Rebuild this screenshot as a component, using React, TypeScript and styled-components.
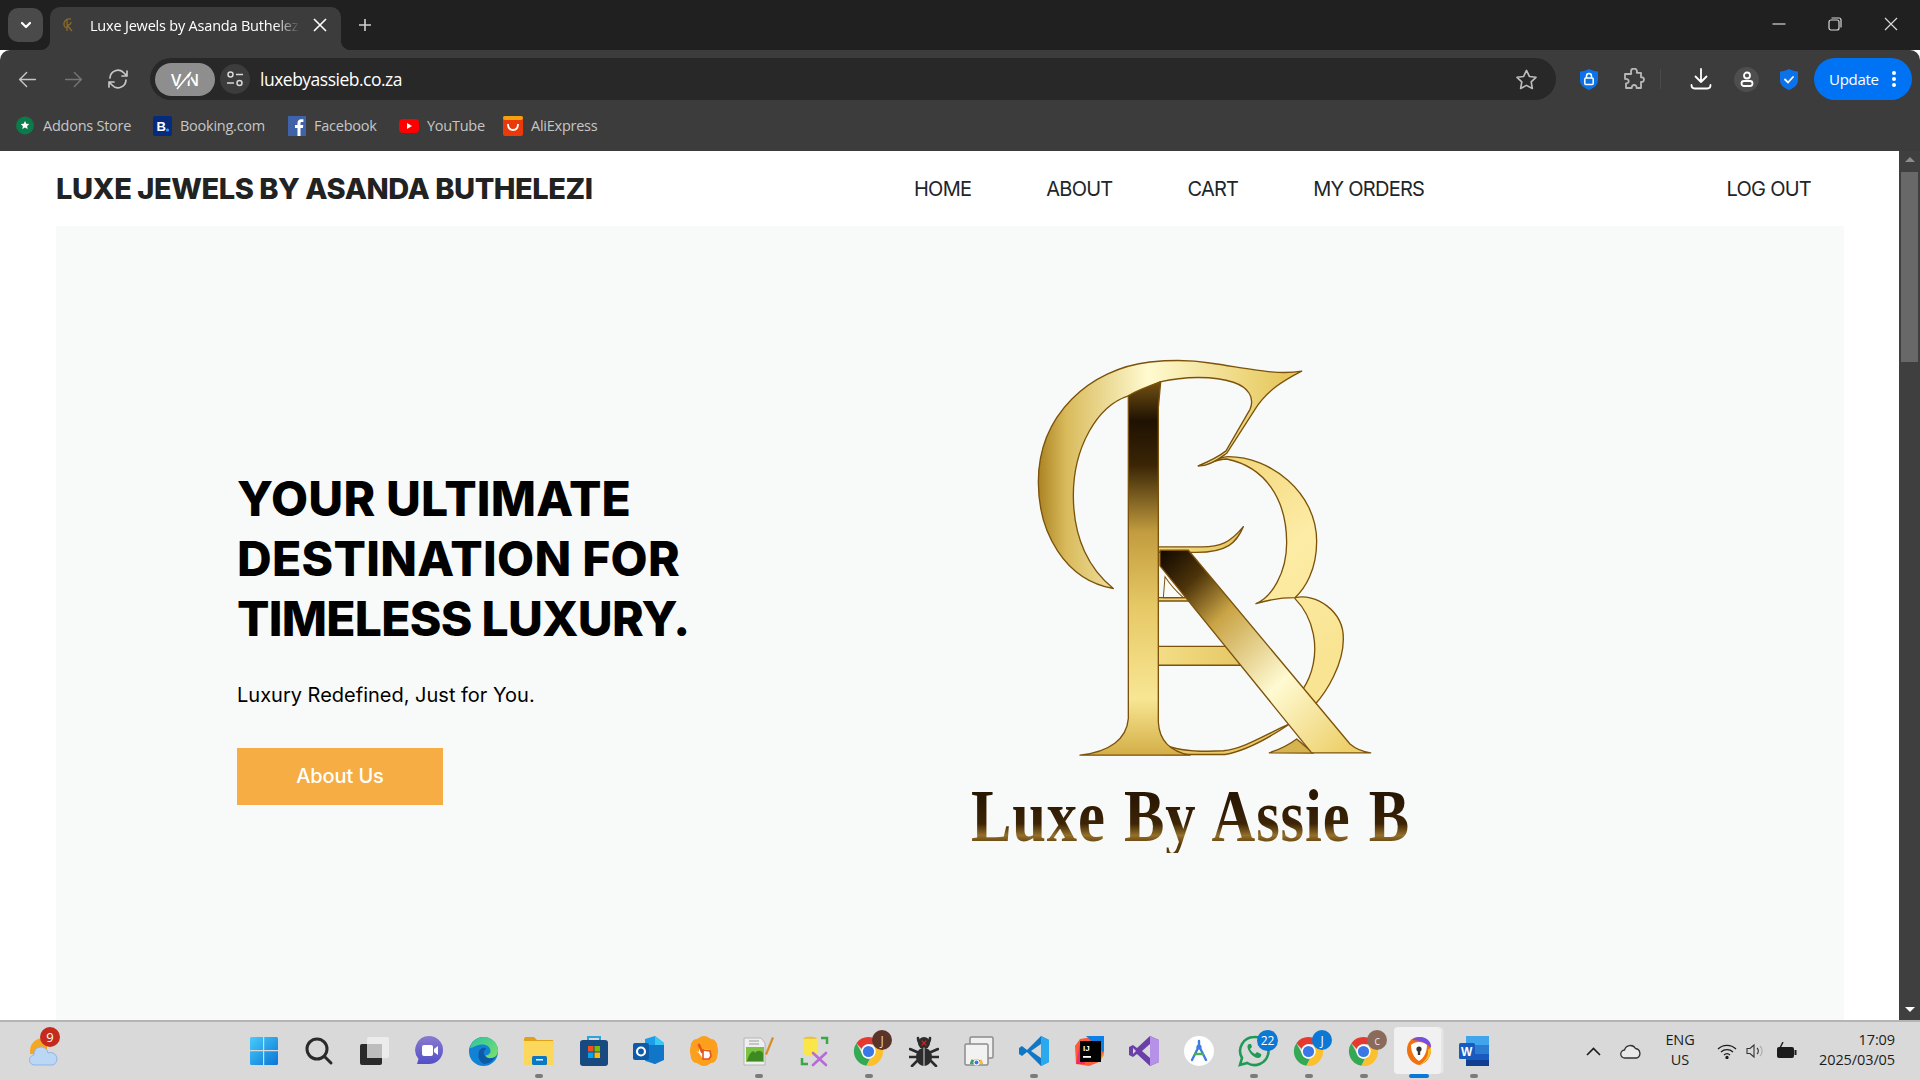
import React from "react";
import styled, { createGlobalStyle } from "styled-components";

const Global = createGlobalStyle`
  html, body { margin: 0; padding: 0; height: 100%; overflow: hidden; background: #fff; }
  * { box-sizing: border-box; }
`;

const UI = `"Open Sans", "Noto Sans", "Liberation Sans", sans-serif`;
const SITE = `Inter, "Liberation Sans", sans-serif`;

const Shell = styled.div`
  width: 1920px; height: 1080px; display: flex; flex-direction: column; overflow: hidden;
  font-family: ${UI};
`;

/* ---------- tab strip ---------- */
const TabStrip = styled.div`
  height: 50px; background: #202020; display: flex; align-items: flex-end; padding-left: 8px; flex: none;
`;
const TabMenu = styled.div`
  width: 35px; height: 34px; margin-bottom: 8px; border-radius: 10px; background: #4a4a4a;
  display: flex; align-items: center; justify-content: center;
`;
const Tab = styled.div`
  width: 291px; height: 43px; margin-left: 7px; background: #3c3c3c; border-radius: 10px 10px 0 0;
  display: flex; align-items: center; padding: 0 13px 7px 13px; position: relative; color: #fff;
  &::before, &::after {
    content: ""; position: absolute; bottom: 0; width: 10px; height: 10px;
  }
  &::before { left: -10px; background: radial-gradient(circle at 0 0, #202020 10px, #3c3c3c 10.5px); }
  &::after { right: -10px; background: radial-gradient(circle at 100% 0, #202020 10px, #3c3c3c 10.5px); }
`;
const TabFavicon = styled.svg`width: 10px; height: 14px; margin-right: 17px; flex: none;`;
const TabTitle = styled.span`
  width: 210px; white-space: nowrap; overflow: hidden; font-size: 14.5px; letter-spacing: -0.2px;
  -webkit-mask-image: linear-gradient(90deg, #000 88%, transparent 100%);
  mask-image: linear-gradient(90deg, #000 88%, transparent 100%);
`;
const TabClose = styled.svg`width: 16px; height: 16px; margin-left: 12px; flex: none;`;
const NewTab = styled.svg`width: 16px; height: 16px; margin: 0 0 17px 16px; flex: none;`;
const WindowControls = styled.div`
  margin-left: auto; display: flex; align-items: center; height: 50px; padding-bottom: 2px; margin-right: 1px;
`;
const WinBtn = styled.div`
  width: 56px; height: 48px; display: flex; align-items: center; justify-content: center;
`;

/* ---------- toolbar ---------- */
const Toolbar = styled.div`
  height: 58px; background: #3c3c3c; border-radius: 10px 10px 0 0; display: flex; align-items: flex-start;
  padding: 8px 8px 0 0; flex: none; position: relative;
`;
const NavBtn = styled.div<{ $w: number }>`
  width: ${(p) => p.$w}px; height: 42px; display: flex; align-items: center; justify-content: center; flex: none;
`;
const Omnibox = styled.div`
  width: 1406px; height: 42px; margin-left: 6px; border-radius: 21px; background: #282828;
  display: flex; align-items: center; padding: 0 18px 0 5px; flex: none;
`;
const VpnPill = styled.div`
  width: 60px; height: 33px; border-radius: 17px; background: #8e8e8e; color: #fff; display: flex;
  align-items: center; justify-content: center; font-size: 16.5px; font-weight: 600; position: relative;
  letter-spacing: 5px; padding-left: 5px;
  svg { position: absolute; left: 19px; top: 6px; }
`;
const SiteBtn = styled.div`
  width: 30px; height: 30px; margin-left: 5px; border-radius: 50%; background: #3c3c3c;
  display: flex; align-items: center; justify-content: center; flex: none;
`;
const Url = styled.span`
  margin-left: 10px; font-size: 17.5px; color: #fff; letter-spacing: -0.5px; flex: 1;
`;
const ToolIcons = styled.div`
  display: flex; align-items: center; height: 42px; margin-left: 14px; flex: 1;
`;
const ToolIcon = styled.div<{ $w: number }>`
  width: ${(p) => p.$w}px; height: 42px; display: flex; align-items: center; justify-content: center; flex: none;
`;
const ProfileDisc = styled.div`
  width: 25px; height: 25px; border-radius: 50%; background: #4e4e4e; display: flex; align-items: center; justify-content: center;
`;
const ToolSep = styled.div`width: 1px; height: 20px; background: #4a4a4a; margin: 0 23px 0 0; flex: none;`;
const UpdateBtn = styled.div`
  width: 98px; height: 42px; margin-left: auto; border-radius: 21px; background: #0073f5; color: #fff; font-size: 15px;
  display: flex; align-items: center; padding: 0 0 1px 15px; gap: 12px; flex: none; letter-spacing: -0.3px;
`;

/* ---------- bookmarks ---------- */
const Bookmarks = styled.div`
  height: 43px; background: #3c3c3c; display: flex; align-items: center; padding: 0 0 7px 16px; flex: none;
  border-bottom: 1px solid #3c3c3c;
`;
const Bookmark = styled.div<{ $w: number; $gap?: number }>`
  width: ${(p) => p.$w}px; display: flex; align-items: center; gap: ${(p) => p.$gap ?? 8}px; flex: none; color: #c6c6c6;
  font-size: 14.5px; letter-spacing: -0.25px;
`;

/* ---------- page ---------- */
const PageRow = styled.div`flex: 1; min-height: 0; display: flex; background: #fff;`;
const Page = styled.div`flex: 1; min-width: 0; padding: 0 55px 0 56px; display: flex; flex-direction: column; overflow: hidden;`;
const Header = styled.header`
  height: 75px; display: flex; align-items: center; flex: none; padding-bottom: 1px;
`;
const Brand = styled.div`
  width: 858px; font-family: ${SITE}; font-weight: 800; font-size: 29px; color: #222; letter-spacing: -0.45px; white-space: nowrap; flex: none;
`;
const NavList = styled.nav`display: flex; gap: 75px; flex: none; margin-top: 2px;`;
const NavItem = styled.a`
  font-family: ${SITE}; font-size: 20px; font-weight: 400; color: #212529; letter-spacing: -0.75px; white-space: nowrap;
`;
const LogOut = styled(NavItem)`margin-left: auto; margin-right: 33px; margin-top: 2px;`;
const Hero = styled.section`flex: 1; min-height: 0; background: #f8faf9; display: flex;`;
const HeroText = styled.div`width: 894px; padding: 243px 0 0 181px; flex: none;`;
const Heading = styled.h1`
  margin: 0; font-family: ${SITE}; font-size: 48px; line-height: 60px; font-weight: 800; color: #000;
`;
const HeadingLine = styled.span<{ $track: number }>`
  display: block; letter-spacing: ${(p) => p.$track}px; white-space: nowrap;
`;
const Sub = styled.p`
  margin: 31px 0 0; font-family: ${SITE}; font-size: 20px; line-height: 30px; color: #000; letter-spacing: 0;
`;
const AboutBtn = styled.a`
  margin-top: 38px; width: 206px; height: 57px; background: #f6ad43; color: #fff; display: flex; align-items: center;
  justify-content: center; font-family: ${SITE}; font-size: 20px; font-weight: 500; letter-spacing: -0.1px; padding-bottom: 1px;
`;
const LogoCol = styled.div`padding-top: 114px; display: flex; flex-direction: column; flex: none;`;
const LogoMark = styled.svg`width: 480px; height: 426px; display: block;`;
const Wordmark = styled.div`
  margin: 14px 0 0 21px; font-family: "Liberation Serif", serif; font-size: 73px; line-height: 73px; white-space: nowrap; font-weight: 700;
  letter-spacing: 1px; word-spacing: 3px; transform: scaleX(0.83); transform-origin: 0 50%; width: 540px;
  background: linear-gradient(180deg, #2a1703 25%, #3c2406 60%, #94702a 76%, #5a3a0c 88%);
  -webkit-background-clip: text; background-clip: text; color: transparent;
`;

const Scrollbar = styled.div`
  width: 21px; flex: none; background: #3f3f3f; display: flex; flex-direction: column; align-items: center; position: relative;
`;
const ScrollUp = styled.div`
  margin-top: 6px; width: 0; height: 0; border-left: 5px solid transparent; border-right: 5px solid transparent; border-bottom: 5px solid #8c8c8c;
`;
const ScrollThumb = styled.div`margin-top: 10px; width: 17px; height: 190px; background: #686868;`;
const ScrollDown = styled.div`
  margin-top: auto; margin-bottom: 8px; width: 0; height: 0; border-left: 5px solid transparent; border-right: 5px solid transparent; border-top: 5px solid #fff;
`;

/* ---------- taskbar ---------- */
const Taskbar = styled.footer`
  height: 60px; flex: none; background: #d9d9d9; border-top: 2px solid #b4b4b4; display: flex; align-items: center; position: relative;
`;
const TaskLeft = styled.div`width: 236px; padding-left: 15px; flex: none; display: flex;`;
const TaskApps = styled.div`display: flex; flex: none; width: 1344px;`;
const Slot = styled.div<{ $active?: boolean }>`
  width: 55px; height: 54px; display: flex; align-items: center; justify-content: center; position: relative; flex: none;
  ${(p) => p.$active && `
    &::before { content: ""; position: absolute; left: 0; top: 3px; width: 47px; height: 47px; margin-left: 3px; background: #f1f1f1; border-radius: 4px; box-shadow: 3px 0 0 -0.5px #e6e6e6; }
  `}
  svg { position: relative; }
`;
const Running = styled.span<{ $active?: boolean }>`
  position: absolute; bottom: 0px; left: 50%; transform: translateX(-50%); height: 4px; border-radius: 2px;
  width: ${(p) => (p.$active ? 20 : 8)}px; background: ${(p) => (p.$active ? "#0a78d4" : "#7b7b7b")};
`;
const Badge = styled.span<{ $bg: string; $fg?: string; $size?: number }>`
  position: absolute; left: 31px; top: 6px; width: ${(p) => p.$size ?? 20}px; height: ${(p) => p.$size ?? 20}px; border-radius: 50%;
  background: ${(p) => p.$bg}; color: ${(p) => p.$fg ?? "#fff"}; font-size: 12px; display: flex; align-items: center; justify-content: center;
  font-family: "Open Sans", sans-serif;
`;
const WeatherBadge = styled(Badge)`left: 25px; top: 3px; font-size: 13px;`;
const Tray = styled.div`flex: 1; display: flex; align-items: center; height: 100%; color: #1c1c1c;`;
const TrayIcon = styled.div<{ $w: number }>`
  width: ${(p) => p.$w}px; display: flex; justify-content: center; align-items: center; flex: none;
`;
const Lang = styled.div`
  width: 48px; text-align: center; font-size: 14.5px; line-height: 20px; flex: none; letter-spacing: -0.1px; padding-bottom: 2px;
`;
const Clock = styled.div`
  margin-left: auto; margin-right: 25px; text-align: right; font-size: 14.5px; line-height: 20px; letter-spacing: -0.1px; padding-bottom: 2px;
`;

/* ---------- icons ---------- */
const S = ({ size = 20, vb = 24, c = "currentColor", w = 2, children }: any) => (
  <svg width={size} height={size} viewBox={`0 0 ${vb} ${vb}`} fill="none" stroke={c} strokeWidth={w} strokeLinecap="round" strokeLinejoin="round">
    {children}
  </svg>
);

const ChromeIcon = () => (
  <svg width="31" height="31" viewBox="0 0 32 32">
    <path d="M16 1a15 15 0 0 1 13 7.5H16a7.5 7.5 0 0 0-7 4.8L3.5 7.5A15 15 0 0 1 16 1z" fill="#e5392f" />
    <path d="M3.5 7.5 9.6 18.5a7.5 7.5 0 0 0 7.9 5L13.8 30.8A15 15 0 0 1 3.5 7.5z" fill="#34a853" />
    <path d="M29 8.5a15 15 0 0 1-15.2 22.3l6-10.6A7.5 7.5 0 0 0 22 11z" fill="#fbc02d" />
    <circle cx="16" cy="16" r="7.4" fill="#fff" />
    <circle cx="16" cy="16" r="5.8" fill="#3b78e7" />
  </svg>
);

const Apps = () => (
  <>
    <Slot>
      <svg width="30" height="30" viewBox="0 0 30 30">
        <defs>
          <linearGradient id="wn" x1="0" y1="0" x2="1" y2="1"><stop offset="0" stopColor="#46cdfb" /><stop offset="1" stopColor="#0a74d6" /></linearGradient>
        </defs>
        <path d="M1 2.5A1.5 1.5 0 0 1 2.5 1H14v13H1zM15.2 1H27.5A1.5 1.5 0 0 1 29 2.5V14H15.2zM1 15.2H14V29H2.5A1.5 1.5 0 0 1 1 27.5zM15.2 15.2H29v12.3a1.5 1.5 0 0 1-1.5 1.5H15.2z" fill="url(#wn)" />
      </svg>
    </Slot>
    <Slot>
      <svg width="30" height="30" viewBox="0 0 30 30" fill="none" stroke="#2a2a2a" strokeWidth="3" strokeLinecap="round">
        <circle cx="13" cy="13" r="10" /><path d="M20.5 20.5 27 27" />
      </svg>
    </Slot>
    <Slot>
      <svg width="30" height="30" viewBox="0 0 30 30">
        <rect x="1" y="8" width="22" height="21" rx="2" fill="#2a2a2a" />
        <rect x="8" y="1" width="22" height="21" rx="2" fill="#eeeeee" fillOpacity="0.85" />
        <rect x="8" y="8" width="15" height="14" fill="#bdbdbd" />
      </svg>
    </Slot>
    <Slot>
      <svg width="30" height="32" viewBox="0 0 30 32">
        <defs><linearGradient id="mt" x1="0" y1="0" x2="0" y2="1"><stop offset="0" stopColor="#8a7ad0" /><stop offset="1" stopColor="#5350c6" /></linearGradient></defs>
        <path d="M15 1a14 14 0 0 1 14 14 14 14 0 0 1-14 14H3l1.5-5A14 14 0 0 1 15 1z" fill="url(#mt)" />
        <rect x="8" y="10" width="11" height="11" rx="2" fill="#fff" /><path d="M20 14l4-3v9l-4-3z" fill="#fff" />
      </svg>
    </Slot>
    <Slot>
      <svg width="31" height="31" viewBox="0 0 32 32">
        <defs>
          <linearGradient id="ed" x1="0" y1="0" x2="1" y2="1"><stop offset="0" stopColor="#2bc4a0" /><stop offset="1" stopColor="#7ee06a" /></linearGradient>
        </defs>
        <circle cx="16" cy="16" r="15" fill="#1283d4" />
        <path d="M2 12C4 4 11 1 16 1c8 0 15 6 15 14 0 5-4 8-8 8-3 0-5-1-5-3 3 0 6-2 5-6-1-5-7-6-11-5-5 1-8 4-10 3z" fill="url(#ed)" />
        <path d="M11 18c0-4 3-6 6-6 2 0 2 2 0 3-2 2 0 7 5 8 2 0 4 0 6-1-3 5-9 8-13 6-3-2-5-6-4-10z" fill="#0c5aa8" />
      </svg>
    </Slot>
    <Slot>
      <svg width="30" height="30" viewBox="0 0 30 30">
        <path d="M0 3a2 2 0 0 1 2-2h8l3 3h16v4H0z" fill="#e0a117" />
        <path d="M0 5h30v23a1 1 0 0 1-1 1H1a1 1 0 0 1-1-1z" fill="#fbd75b" />
        <rect x="8" y="20" width="15" height="9" rx="1.5" fill="#0a78c4" /><rect x="12" y="23" width="7" height="1.5" fill="#eaf5ff" />
      </svg>
      <Running />
    </Slot>
    <Slot>
      <svg width="30" height="32" viewBox="0 0 30 32">
        <path d="M9 6V2h12v4" fill="none" stroke="#2fa4dc" strokeWidth="2" />
        <rect x="1" y="5" width="28" height="26" rx="3" fill="#164a80" />
        <rect x="9" y="11" width="5.5" height="5.5" fill="#f25022" /><rect x="15.5" y="11" width="5.5" height="5.5" fill="#7fba00" />
        <rect x="9" y="17.5" width="5.5" height="5.5" fill="#00a4ef" /><rect x="15.5" y="17.5" width="5.5" height="5.5" fill="#ffb900" />
      </svg>
    </Slot>
    <Slot>
      <svg width="31" height="30" viewBox="0 0 31 30">
        <path d="M12 3 22 0l9 7v16l-9 5-10-3z" fill="#1b9fe8" /><path d="M22 0l9 7v8H22z" fill="#38c9f5" /><path d="M12 9h19v15l-9 4-10-4z" fill="#1276c8" />
        <rect x="0" y="7" width="16" height="17" rx="2" fill="#0d5ba8" />
        <circle cx="8" cy="15.5" r="4" fill="none" stroke="#fff" strokeWidth="2.2" />
      </svg>
    </Slot>
    <Slot>
      <svg width="30" height="32" viewBox="0 0 30 32">
        <path d="M15 1c3 0 5 2 7 3 3 0 5 2 6 5 0 2 1 4 1 7s-1 5-1 7c-1 3-3 5-6 5-2 1-4 3-7 3s-5-2-7-3c-3 0-5-2-6-5 0-2-1-4-1-7s1-5 1-7c1-3 3-5 6-5 2-1 4-3 7-3z" fill="#fb9f1d" />
        <path d="M10 10l4 8 1-4 6 1 1 5-2 4h-6l-4-6-3-2 3 1z" fill="#fff" /><path d="M10 10l3 7" stroke="#e2541b" strokeWidth="2.5" strokeLinecap="round" /><path d="M14 15l7 1 1 5-2 3h-6z" fill="none" stroke="#e2541b" strokeWidth="1.6" />
      </svg>
    </Slot>
    <Slot>
      <svg width="31" height="32" viewBox="0 0 31 32">
        <path d="M1 3h17l4 5v22H1z" fill="#efefef" stroke="#b5b5b5" />
        <rect x="3" y="12" width="18" height="15" fill="#7cc243" /><path d="M4 26c3-9 6-12 8-8 2-3 6-3 8 0v8z" fill="#3d8a22" />
        <path d="M6 6h10M6 9h10" stroke="#9a9a9a" /><path d="M22 19 29 2l2 1-7 17z" fill="#d98b24" />
      </svg>
      <Running />
    </Slot>
    <Slot>
      <svg width="30" height="32" viewBox="0 0 30 32">
        <ellipse cx="11" cy="4" rx="7" ry="2.5" fill="#e6c73c" /><path d="M4 4v14c0 3 14 3 14 0V4" fill="#fbe64a" />
        <path d="M22 3h6v6M3 23v6h6" fill="none" stroke="#39a845" strokeWidth="2.5" />
        <path d="M14 18l13 12M27 18 14 30" stroke="#b66bd6" strokeWidth="2.6" strokeLinecap="round" />
      </svg>
    </Slot>
    <Slot>
      <ChromeIcon />
      <Running />
      <Badge $bg="#5a3428" $fg="#e8d6cf">J</Badge>
    </Slot>
    <Slot>
      <svg width="30" height="32" viewBox="0 0 30 32" fill="none" stroke="#2c2c2c" strokeWidth="2.6" strokeLinecap="round">
        <path d="M9 3c0 3 1 5 3 6M21 3c0 3-1 5-3 6M1 14l7 3M29 14l-7 3M0 22h7M30 22h-7M3 31l5-5M27 31l-5-5" />
        <circle cx="15" cy="8" r="6" fill="#2c2c2c" stroke="none" />
        <path d="M15 13c5 0 8 4 8 9s-4 9-8 9-8-4-8-9 3-9 8-9z" fill="#2c2c2c" stroke="none" />
        <path d="M15 13v18" stroke="#d9d9d9" strokeWidth="1" />
        <path d="M13 6l2 2 2-2M13 10l2-2 2 2" stroke="#d42020" strokeWidth="1.2" />
      </svg>
    </Slot>
    <Slot>
      <svg width="30" height="30" viewBox="0 0 30 30">
        <rect x="6" y="1" width="23" height="21" rx="1.5" fill="#f0f0f0" stroke="#8c8c8c" strokeWidth="1.5" />
        <rect x="1" y="8" width="23" height="21" rx="1.5" fill="#f2f2f2" stroke="#8c8c8c" strokeWidth="1.5" />
        <path d="M6 28a7 7 0 0 1 13 0z" fill="#e5392f" /><path d="M6 28a7 7 0 0 1 2-5l4 5z" fill="#34a853" /><path d="M19 28a7 7 0 0 0-2-5l-3 5z" fill="#fbc02d" />
        <circle cx="12.5" cy="26.5" r="3" fill="#fff" /><circle cx="12.5" cy="26.5" r="2" fill="#3b78e7" />
      </svg>
    </Slot>
    <Slot>
      <svg width="30" height="32" viewBox="0 0 30 32">
        <path d="M22 1 30 5v22l-8 4L8 17l-5 4-3-2V13l3-2 5 4z" fill="#0f77c4" />
        <path d="M22 1 30 5v22l-8 4z" fill="#2aa9ee" /><path d="M22 9 12 16l10 7z" fill="#d9d9d9" />
      </svg>
      <Running />
    </Slot>
    <Slot>
      <svg width="30" height="30" viewBox="0 0 30 30">
        <path d="M1 10 6 3l12-2 12-1v16l-5 10-10 4L2 28z" fill="#ff5a35" />
        <path d="M12 0h18v17z" fill="#0a80e8" /><path d="M2 28 6 8l5 20z" fill="#ef2a6a" /><path d="M25 27l5-12v4z" fill="#f79a12" />
        <rect x="6" y="5" width="21" height="21" fill="#000" />
        <text x="9" y="15" fontFamily="Liberation Sans" fontWeight="700" fontSize="8" fill="#fff">IJ</text>
        <rect x="9" y="20" width="8" height="1.8" fill="#fff" />
      </svg>
    </Slot>
    <Slot>
      <svg width="30" height="30" viewBox="0 0 30 30">
        <path d="M21 0 30 4v22l-9 4L8 18l-4 3-4-2V11l4-2 4 3z" fill="#6a3fa8" /><path d="M21 0 30 4v22l-9 4z" fill="#b592e8" />
        <path d="M21 8 13 15l8 7z" fill="#d9d9d9" /><path d="M4 12v6l3-3z" fill="#d9d9d9" />
      </svg>
    </Slot>
    <Slot>
      <svg width="30" height="30" viewBox="0 0 30 30">
        <circle cx="15" cy="15" r="15" fill="#fff" />
        <path d="M15 5v5M15 10 8 24M15 10l7 14" stroke="#3f7de0" strokeWidth="2.4" fill="none" strokeLinecap="round" />
        <circle cx="15" cy="11" r="2.6" fill="#3f7de0" /><path d="M10 18h10" stroke="#4caf50" strokeWidth="2.4" />
      </svg>
    </Slot>
    <Slot>
      <svg width="32" height="32" viewBox="0 0 32 32" fill="none">
        <path d="M16 2a14 14 0 0 0-12 21L2 30l7.300-2A14 14 0 1 0 16 2z" stroke="#1e9a56" strokeWidth="2.6" />
        <path d="M11 9c-2 1-2 4 0 7 2 4 6 7 9 7 2 0 4-2 3-4l-4-2-2 2c-2-1-4-3-5-5l2-2-1-3z" fill="#1e9a56" />
      </svg>
      <Running />
      <Badge $bg="#0a78d4" $size={21}>22</Badge>
    </Slot>
    <Slot>
      <ChromeIcon />
      <Running />
      <Badge $bg="#0a78d4">J</Badge>
    </Slot>
    <Slot>
      <ChromeIcon />
      <Running />
      <Badge $bg="#8a6a5a" $fg="#e9dcd4">c</Badge>
    </Slot>
    <Slot $active>
      <svg width="30" height="30" viewBox="0 0 30 30">
        <path d="M15 1c8 0 12 6 12 13 0 8-6 14-12 15-6-1-12-7-12-15 0-7 4-13 12-13z" fill="#f0710f" />
        <path d="M8 4c4-4 13-4 17 1 2 2 2 5 2 7-4-5-12-8-19-8z" fill="#7a4fe0" />
        <path d="M27 11c1 9-5 16-12 18 5-3 10-8 9-15z" fill="#f7c12e" />
        <path d="M15 6c3 0 6 1 8 3 0 7-3 13-8 16-5-3-8-9-8-16 2-2 5-3 8-3z" fill="#fff" />
        <circle cx="15" cy="13" r="2.6" fill="#333" /><rect x="13.800" y="14" width="2.400" height="5" fill="#333" />
      </svg>
      <Running $active />
    </Slot>
    <Slot>
      <svg width="30" height="30" viewBox="0 0 30 30">
        <rect x="7" y="0" width="23" height="9" fill="#41a5ee" /><rect x="7" y="9" width="23" height="9" fill="#2b7cd3" />
        <rect x="7" y="18" width="23" height="6" fill="#185abd" /><rect x="7" y="24" width="23" height="6" fill="#103f91" />
        <rect x="0" y="7" width="16" height="16" rx="1.5" fill="#185abd" />
        <text x="2" y="19.500" fontFamily="Liberation Sans" fontWeight="700" fontSize="12" fill="#fff">W</text>
      </svg>
      <Running />
    </Slot>
  </>
);

const Logo = () => (
  <LogoMark viewBox="0 0 1440 1260" preserveAspectRatio="none">
    <defs>
      <linearGradient id="gC" x1="260" y1="0" x2="1000" y2="0" gradientUnits="userSpaceOnUse">
        <stop offset="0" stopColor="#a8801f" /><stop offset="0.12" stopColor="#d9bb5c" /><stop offset="0.45" stopColor="#fffad0" /><stop offset="1" stopColor="#e6c85e" />
      </linearGradient>
      <linearGradient id="gB" x1="800" y1="350" x2="1180" y2="900" gradientUnits="userSpaceOnUse">
        <stop offset="0" stopColor="#f2d679" /><stop offset="0.5" stopColor="#fdeca6" /><stop offset="1" stopColor="#f8e492" />
      </linearGradient>
      <linearGradient id="gS" x1="0" y1="130" x2="0" y2="1225" gradientUnits="userSpaceOnUse">
        <stop offset="0" stopColor="#6e4d12" /><stop offset="0.1" stopColor="#1f1202" /><stop offset="0.22" stopColor="#3a2506" /><stop offset="0.4" stopColor="#c29c3f" /><stop offset="0.6" stopColor="#e6c865" /><stop offset="0.85" stopColor="#f8e694" /><stop offset="1" stopColor="#d4af48" />
      </linearGradient>
      <linearGradient id="gR" x1="640" y1="630" x2="1190" y2="1210" gradientUnits="userSpaceOnUse">
        <stop offset="0" stopColor="#150b00" /><stop offset="0.15" stopColor="#4e340a" /><stop offset="0.32" stopColor="#c9a445" /><stop offset="0.65" stopColor="#fffad2" /><stop offset="1" stopColor="#edd06b" />
      </linearGradient>
      <linearGradient id="gBar" x1="625" y1="0" x2="880" y2="0" gradientUnits="userSpaceOnUse">
        <stop offset="0" stopColor="#f3dd85" /><stop offset="1" stopColor="#e5c765" />
      </linearGradient>
    </defs>
    <g stroke="#7c520a" strokeWidth="4" strokeLinejoin="round">
      {/* lower bowl */}
      <path d="M1035 762C1095 748 1182 800 1180 885C1180 960 1130 1040 1095 1078L1058 1034C1088 990 1102 930 1090 870C1080 820 1055 785 1035 765Z" fill="url(#gB)" />
      {/* upper bowl */}
      <path d="M745 372C790 358 815 345 835 345C960 345 1100 450 1100 595C1100 680 1065 735 1035 762C1000 762 950 770 918 780C965 760 1010 690 1010 600C1010 470 945 375 830 352C800 352 770 368 745 372Z" fill="url(#gB)" />
      {/* C and top */}
      <path d="M1055 92C980 105 900 85 780 68C720 58 650 60 600 65C420 85 265 220 265 420C265 570 345 710 490 735C420 680 370 590 370 460C370 320 440 195 535 165L630 124C700 108 790 105 850 125C895 140 915 170 900 205L828 328C800 350 770 362 745 372C780 375 815 345 830 335L915 205C950 150 1000 120 1055 92Z" fill="url(#gC)" />
      {/* cross bars */}
      <path d="M625 612H755C810 612 840 600 880 552C860 600 830 628 740 628H625Z" fill="url(#gBar)" />
      <path d="M625 906H845L880 962H625Z" fill="url(#gBar)" />
      <path d="M625 762H720L726 772H625Z" fill="#efd67c" />
      {/* lower swash */}
      <path d="M640 1195C680 1215 760 1218 820 1215C880 1210 950 1165 1020 1135C960 1175 890 1215 825 1226H640Z" fill="#e8cb68" />
      {/* stem */}
      <path d="M535 165C560 150 600 135 632 124L625 200V1130C628 1190 665 1218 720 1228H390C480 1218 530 1180 535 1120Z" fill="url(#gS)" />
      {/* small foot */}
      <path d="M958 1221C985 1212 1020 1195 1040 1180L1090 1222Z" fill="#d5b350" />
      {/* diagonal */}
      <path d="M630 622H715L1200 1195C1220 1212 1240 1218 1262 1221H1085L630 668Z" fill="url(#gR)" />
    </g>
    <path d="M645 700C655 715 675 740 700 762H640Z" fill="#fbfbf7" stroke="#7c520a" strokeWidth="3" />
  </LogoMark>
);

export default function App() {
  return (
    <Shell>
      <Global />
      <TabStrip>
        <TabMenu>
          <svg width="14" height="14" viewBox="0 0 14 14" fill="none" stroke="#fff" strokeWidth="2.2" strokeLinecap="round" strokeLinejoin="round"><path d="M3 5l4 4 4-4" /></svg>
        </TabMenu>
        <Tab>
          <TabFavicon viewBox="0 0 10 14" fill="none" stroke="#8a6a2a" strokeWidth="1.3"><path d="M8 1C4 0 1 3 1 6s2 4 3 4M4 1v12M4 7l5 6M4 7c3 0 4-1 4-3" /></TabFavicon>
          <TabTitle>Luxe Jewels by Asanda Buthelezi</TabTitle>
          <TabClose viewBox="0 0 16 16" fill="none" stroke="#fff" strokeWidth="1.6"><path d="M2 2l12 12M14 2 2 14" /></TabClose>
        </Tab>
        <NewTab viewBox="0 0 16 16" fill="none" stroke="#d0d0d0" strokeWidth="1.6"><path d="M8 2v12M2 8h12" /></NewTab>
        <WindowControls>
          <WinBtn><svg width="14" height="14" viewBox="0 0 14 14" stroke="#d8d8d8" strokeWidth="1.2"><path d="M0.500 7h13" /></svg></WinBtn>
          <WinBtn><svg width="14" height="14" viewBox="0 0 14 14" fill="none" stroke="#d8d8d8" strokeWidth="1.2"><rect x="1" y="3" width="10" height="10" rx="2" /><path d="M3.500 1H11a2 2 0 0 1 2 2v7.500" /></svg></WinBtn>
          <WinBtn><svg width="14" height="14" viewBox="0 0 14 14" fill="none" stroke="#d8d8d8" strokeWidth="1.2"><path d="M1 1l12 12M13 1 1 13" /></svg></WinBtn>
        </WindowControls>
      </TabStrip>

      <Toolbar>
        <NavBtn $w={54}><S size={21} c="#c6c6c6" w={1.7}><path d="M21 12H3M11 4l-8 8 8 8" /></S></NavBtn>
        <NavBtn $w={38}><S size={21} c="#757575" w={1.7}><path d="M3 12h18M13 4l8 8-8 8" /></S></NavBtn>
        <NavBtn $w={52}>
          <S size={24} c="#c6c6c6" w={1.7}><path d="M4 11a8 8 0 0 1 14-5l3 3M21 4v5h-5M20 13a8 8 0 0 1-14 5l-3-3M3 20v-5h5" /></S>
        </NavBtn>
        <Omnibox>
          <VpnPill>
            VN
            <svg width="20" height="22" viewBox="0 0 20 22" fill="none"><path d="M6 21 20 3" stroke="#8e8e8e" strokeWidth="2" /><path d="M3 20 17 3" stroke="#fff" strokeWidth="1.6" /></svg>
          </VpnPill>
          <SiteBtn>
            <svg width="18" height="18" viewBox="0 0 18 18" fill="none" stroke="#d8d8d8" strokeWidth="1.5"><circle cx="4.500" cy="4.500" r="2.500" /><path d="M10 4.500h7M1 13h7" /><circle cx="13.500" cy="13" r="2.500" /></svg>
          </SiteBtn>
          <Url>luxebyassieb.co.za</Url>
          <S size={23} c="#bdbdbd" w={1.7}><path d="M12 2.500l3 6.300 6.900.9-5 4.800 1.200 6.900-6.100-3.300-6.100 3.300 1.200-6.900-5-4.800 6.900-.9z" /></S>
        </Omnibox>
        <ToolIcons>
          <ToolIcon $w={38}>
            <svg width="18" height="21" viewBox="0 0 18 21"><path d="M9 0c3 1.500 6 2.500 9 2.500V11c0 5-4 8-9 10-5-2-9-5-9-10V2.500C3 2.500 6 1.500 9 0z" fill="#0b72ea" /><rect x="4.800" y="9" width="8.400" height="6.500" rx="1" fill="none" stroke="#fff" strokeWidth="1.5" /><path d="M6.500 9V7a2.500 2.500 0 0 1 5 0v2" fill="none" stroke="#fff" strokeWidth="1.5" /></svg>
          </ToolIcon>
          <ToolIcon $w={52}>
            <svg width="22" height="22" viewBox="0 0 22 22" fill="none" stroke="#b8b8b8" strokeWidth="1.8" strokeLinejoin="round"><path d="M8 3.500a3 3 0 0 1 6 0c0 .6-.3 1-.2 1.300H18v4.500c1.800-.3 3 .6 3 2.200s-1.200 2.800-3 2.300V20h-4.500c.4-1.800-.8-3-2.300-3s-2.800 1.200-2.300 3H3v-4.600c1.500.3 2.700-.8 2.700-2.200S4.500 10.700 2 11V6h6.200C8.300 5 8 4.200 8 3.500z" /></svg>
          </ToolIcon>
          <ToolSep />
          <ToolIcon $w={33}>
            <svg width="22" height="22" viewBox="0 0 22 22" fill="none" stroke="#fff" strokeWidth="1.8" strokeLinecap="round" strokeLinejoin="round"><path d="M11 1v13M5.500 8.500 11 14l5.500-5.500M1.500 17c0 2 1 3.500 3 3.500h13c2 0 3-1.500 3-3.500" /></svg>
          </ToolIcon>
          <ToolIcon $w={59}>
            <ProfileDisc>
              <svg width="14" height="16" viewBox="0 0 14 16" fill="none" stroke="#fff" strokeWidth="1.8"><circle cx="7" cy="4.500" r="3" /><rect x="1.500" y="10" width="11" height="5" rx="2.500" /></svg>
            </ProfileDisc>
          </ToolIcon>
          <ToolIcon $w={25}>
            <svg width="18" height="21" viewBox="0 0 18 21"><path d="M9 0c3 1.500 6 2.500 9 2.500V11c0 5-4 8-9 10-5-2-9-5-9-10V2.500C3 2.500 6 1.500 9 0z" fill="#0b72ea" /><path d="M5 10.500l3 3 5-5.500" fill="none" stroke="#fff" strokeWidth="1.800" strokeLinecap="round" /></svg>
          </ToolIcon>
          <UpdateBtn>
            Update
            <svg width="6" height="18" viewBox="0 0 6 18" fill="#fff"><circle cx="3" cy="3" r="2" /><circle cx="3" cy="9" r="2" /><circle cx="3" cy="15" r="2" /></svg>
          </UpdateBtn>
        </ToolIcons>
      </Toolbar>

      <Bookmarks>
        <Bookmark $w={137} $gap={9}>
          <svg width="18" height="19" viewBox="0 0 18 19"><circle cx="9" cy="9.500" r="9" fill="#0b7b4b" /><path d="M9 5l1.300 2.700 3 .3-2.200 2 .6 3L9 11.500 6.300 13l.6-3-2.200-2 3-.3z" fill="#fff" /></svg>
          Addons Store
        </Bookmark>
        <Bookmark $w={135}>
          <svg width="19" height="20" viewBox="0 0 19 20"><rect width="19" height="20" rx="2" fill="#062a7c" /><text x="3.500" y="15" fontFamily="Liberation Sans" fontSize="13" fontWeight="700" fill="#fff">B</text><circle cx="14.500" cy="14" r="1.600" fill="#3aa0f5" /></svg>
          Booking.com
        </Bookmark>
        <Bookmark $w={111}>
          <svg width="18" height="20" viewBox="0 0 18 20"><rect width="18" height="20" fill="#3f62a8" /><path d="M12.500 20v-8h2.400l.4-3h-2.800V7.300c0-.9.3-1.400 1.400-1.400h1.500V3.300c-.3 0-1.200-.1-2.200-.1-2.200 0-3.700 1.300-3.700 3.800V9H7v3h2.500v8z" fill="#fff" /></svg>
          Facebook
        </Bookmark>
        <Bookmark $w={104}>
          <svg width="20" height="14" viewBox="0 0 20 14"><rect width="20" height="14" rx="4" fill="#f00" /><path d="M8 4l5 3-5 3z" fill="#fff" /></svg>
          YouTube
        </Bookmark>
        <Bookmark $w={110}>
          <svg width="20" height="20" viewBox="0 0 20 20"><rect width="20" height="20" rx="2" fill="#ea3a0c" /><rect width="20" height="4" rx="2" fill="#f5a00d" /><path d="M5 8c0 4 2 6 5 6s5-2 5-6" fill="none" stroke="#fff" strokeWidth="1.800" /></svg>
          AliExpress
        </Bookmark>
      </Bookmarks>

      <PageRow>
        <Page>
          <Header>
            <Brand>LUXE JEWELS BY ASANDA BUTHELEZI</Brand>
            <NavList>
              <NavItem>HOME</NavItem>
              <NavItem>ABOUT</NavItem>
              <NavItem>CART</NavItem>
              <NavItem>MY ORDERS</NavItem>
            </NavList>
            <LogOut>LOG OUT</LogOut>
          </Header>
          <Hero>
            <HeroText>
              <Heading>
                <HeadingLine $track={0.18}>YOUR ULTIMATE</HeadingLine>
                <HeadingLine $track={0.29}>DESTINATION FOR</HeadingLine>
                <HeadingLine $track={-0.73}>TIMELESS LUXURY.</HeadingLine>
              </Heading>
              <Sub>Luxury Redefined, Just for You.</Sub>
              <AboutBtn>About Us</AboutBtn>
            </HeroText>
            <LogoCol>
              <Logo />
              <Wordmark>Luxe By Assie B</Wordmark>
            </LogoCol>
          </Hero>
        </Page>
        <Scrollbar>
          <ScrollUp />
          <ScrollThumb />
          <ScrollDown />
        </Scrollbar>
      </PageRow>

      <Taskbar>
        <TaskLeft>
          <Slot>
            <svg width="32" height="32" viewBox="0 0 32 32"><path d="M3 16a13 13 0 0 1 13-13h4v16H3z" fill="#f5a623" /><path d="M8 30a5 5 0 0 1-1-10 7 7 0 0 1 14-2 6 6 0 0 1 5 12z" fill="#bcd6f5" stroke="#8fb5e8" /></svg>
            <WeatherBadge $bg="#c42b1c" $size={20}>9</WeatherBadge>
          </Slot>
        </TaskLeft>
        <TaskApps>
          <Apps />
        </TaskApps>
        <Tray>
          <TrayIcon $w={26}>
            <svg width="15" height="9" viewBox="0 0 15 9" fill="none" stroke="#1c1c1c" strokeWidth="1.600"><path d="M1 8l6.500-6.500L14 8" /></svg>
          </TrayIcon>
          <TrayIcon $w={50}>
            <svg width="22" height="15" viewBox="0 0 22 15" fill="#e9e9e9" stroke="#333" strokeWidth="1.300"><path d="M5 14a4 4 0 0 1-.5-8 6 6 0 0 1 11-1.500A5 5 0 0 1 17 14z" /></svg>
          </TrayIcon>
          <Lang>ENG<br />US</Lang>
          <TrayIcon $w={46}>
            <svg width="20" height="16" viewBox="0 0 20 16" fill="none" stroke="#1c1c1c" strokeWidth="1.300"><path d="M1 6a13 13 0 0 1 18 0M4 9a9 9 0 0 1 12 0M7 12a4.500 4.500 0 0 1 6 0" /><circle cx="10" cy="14.500" r="1" fill="#1c1c1c" /></svg>
          </TrayIcon>
          <TrayIcon $w={12}>
            <svg width="20" height="16" viewBox="0 0 20 16" fill="none" stroke="#333" strokeWidth="1.100" style={{ flex: "none" }}><path d="M1 5.500h3L8 2v12l-4-3.500H1z" /><path d="M11 5a4 4 0 0 1 0 6" /><path d="M14 3a7 7 0 0 1 0 10" stroke="#aaa" /></svg>
          </TrayIcon>
          <TrayIcon $w={50}>
            <svg width="22" height="18" viewBox="0 0 22 18"><rect x="1" y="5" width="17" height="11" rx="2" fill="#1c1c1c" /><rect x="18.500" y="8" width="2" height="5" fill="#1c1c1c" /><path d="M7 0 4 6h3L5.500 10" stroke="#1c1c1c" strokeWidth="1.400" fill="none" /></svg>
          </TrayIcon>
          <Clock>17:09<br />2025/03/05</Clock>
        </Tray>
      </Taskbar>
    </Shell>
  );
}
